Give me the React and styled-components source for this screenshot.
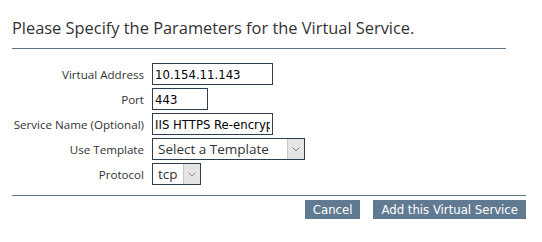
import React from 'react';
import styled, { createGlobalStyle } from 'styled-components';

const GlobalStyle = createGlobalStyle`
  html, body {
    margin: 0;
    background: #fff;
  }
  body {
    font-family: "Open Sans", "Noto Sans", sans-serif;
    color: #333;
  }
`;

const fields = [
  { label: 'Virtual Address', value: '10.154.11.143', width: 121 },
  { label: 'Port', value: '443', width: 56 },
  { label: 'Service Name (Optional)', value: 'IIS HTTPS Re-encrypt', width: 121 },
];

function Chevron() {
  return (
    <svg width="8" height="5" viewBox="0 0 8 5">
      <path d="M0.5 0.5 L4 4 L7.5 0.5" fill="none" stroke="#8a8a8a" strokeWidth="1" />
    </svg>
  );
}

function Dropdown({ value, width }) {
  return (
    <SelectBox $width={width}>
      <SelectText>{value}</SelectText>
      <ArrowBox>
        <Chevron />
      </ArrowBox>
    </SelectBox>
  );
}

export default function App() {
  return (
    <Page>
      <GlobalStyle />
      <Title>Please Specify the Parameters for the Virtual Service.</Title>
      <TopRule />
      <Form>
        {fields.map((f) => (
          <React.Fragment key={f.label}>
            <Label>{f.label}</Label>
            <Cell>
              <TextInput $width={f.width} defaultValue={f.value} readOnly />
            </Cell>
          </React.Fragment>
        ))}
        <Label>Use Template</Label>
        <Cell>
          <Dropdown value="Select a Template" width={153} />
        </Cell>
        <Label>Protocol</Label>
        <Cell>
          <Dropdown value="tcp" width={49} />
        </Cell>
      </Form>
      <BottomRule />
      <Actions>
        <Button>Cancel</Button>
        <Button>Add this Virtual Service</Button>
      </Actions>
    </Page>
  );
}

const Page = styled.div`
  padding: 17px 16px 0 12px;
  width: 514px;
`;

const Title = styled.h2`
  margin: 0;
  font-size: 16.4px;
  font-weight: 400;
  color: #333;
  line-height: 22px;
`;

const TopRule = styled.hr`
  margin: 9px 0 0 0;
  width: 494px;
  border: 0;
  border-top: 1px solid #5e7386;
`;

const Form = styled.div`
  display: grid;
  grid-template-columns: 132px auto;
  column-gap: 8px;
  row-gap: 3px;
  margin-top: 14px;
  align-items: center;
`;

const Label = styled.div`
  text-align: right;
  font-size: 11.6px;
  color: #333;
  white-space: nowrap;
`;

const Cell = styled.div`
  display: flex;
`;

const TextInput = styled.input`
  box-sizing: border-box;
  width: ${(p) => p.$width}px;
  height: 22px;
  border: 1px solid #2c3e50;
  padding: 0 2px;
  font-family: Tahoma, "DejaVu Sans Condensed", "Liberation Sans", sans-serif;
  font-size: 13px;
  color: #000;
  outline: none;
`;

const SelectBox = styled.div`
  box-sizing: border-box;
  width: ${(p) => p.$width}px;
  height: 22px;
  border: 1px solid #2c3e50;
  display: flex;
  align-items: stretch;
`;

const SelectText = styled.div`
  flex: 1;
  padding-left: 5px;
  font-size: 13.5px;
  line-height: 20px;
  color: #333;
  white-space: nowrap;
  overflow: hidden;
`;

const ArrowBox = styled.div`
  width: 16px;
  background: #e4e4e4;
  border-left: 1px solid #c8c8c8;
  display: flex;
  align-items: center;
  justify-content: center;
`;

const BottomRule = styled.hr`
  margin: 10px 0 0 0;
  width: 514px;
  border: 0;
  border-top: 1px solid #5e7386;
`;

const Actions = styled.div`
  display: flex;
  justify-content: flex-end;
  gap: 13px;
  margin-top: 4px;
`;

const Button = styled.button`
  height: 19px;
  padding: 0 8px;
  border: 0;
  background: #5f7a91;
  color: #fff;
  font-family: Tahoma, "DejaVu Sans Condensed", "Liberation Sans", sans-serif;
  font-size: 13px;
  line-height: 19px;
`;
